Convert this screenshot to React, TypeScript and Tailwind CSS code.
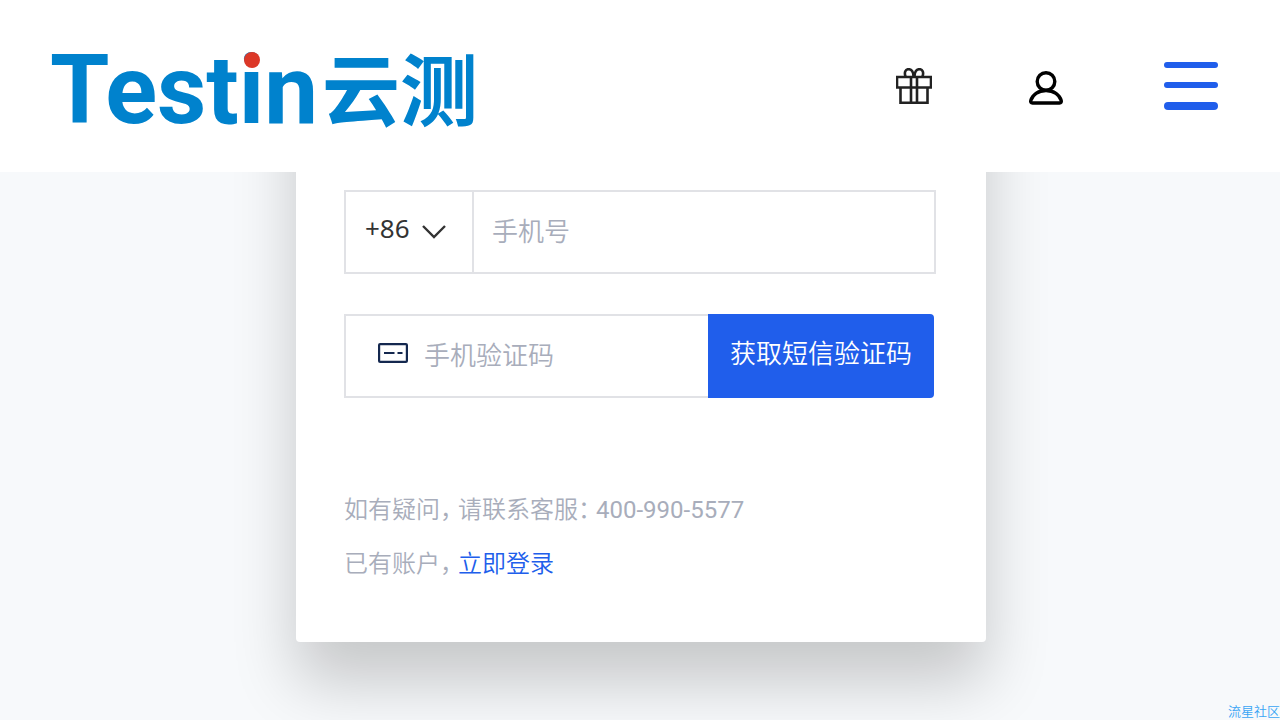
import { useState } from "react"

const cjk = "font-['Roboto','Noto_Sans_CJK_SC',sans-serif]"

function Logo() {
  return (
    <a href="#" aria-label="Testin云测" className="flex items-center gap-1 text-[#0082cd]">
      <span className="pt-2 font-['Roboto',sans-serif] text-[96px] leading-[100px] font-bold">
        Test
        <span className="relative">
          i
          <span className="absolute top-[18px] left-1/2 size-4 -translate-x-1/2 rounded-full bg-[#dc3828]" />
        </span>
        n
      </span>
      <span className="font-['Noto_Sans_CJK_SC',sans-serif] text-[78px] leading-[100px] font-bold">云测</span>
    </a>
  )
}

function GiftIcon() {
  return (
    <svg viewBox="0 0 36 36" className="size-9" fill="none" stroke="#222" strokeWidth="2.600">
      <path d="M1 9h34v10.500H1zM4.500 19.500v15.300h27V19.500M15 9v26M21 9v26" />
      <path d="M17.500 8.500c0-5-2-7.300-5-7.300S8 4.500 9.500 8.500M18.500 8.500c0-5 2-7.300 5-7.300s4.500 3.300 3 7.300" />
    </svg>
  )
}

function UserIcon() {
  return (
    <svg viewBox="0 0 36 36" className="size-9 overflow-visible" fill="none" stroke="#000" strokeWidth="3.400">
      <circle cx="16" cy="13.500" r="8.800" />
      <path d="M16 22.500C8 22.500 2.500 27 .8 32.500q-.6 2.500 1.700 2.500h27q2.300 0 1.700-2.500C29.500 27 24 22.500 16 22.500z" />
    </svg>
  )
}

function CodeIcon() {
  return (
    <svg viewBox="0 0 30 20" className="h-5 w-[30px] shrink-0" fill="none" stroke="#14284f" strokeWidth="2.200">
      <rect x="1.100" y="1.100" width="27.800" height="17.800" rx="1" />
      <path d="M6 10h10.500M19.500 10H24.500" />
    </svg>
  )
}

function Header() {
  return (
    <header className="relative z-10 flex h-[172px] shrink-0 items-center justify-between bg-white pr-[62px] pl-[50px]">
      <Logo />
      <nav className="flex items-center gap-[98px]">
        <button type="button" aria-label="礼品">
          <GiftIcon />
        </button>
        <button type="button" aria-label="用户">
          <UserIcon />
        </button>
        <button type="button" aria-label="菜单" className="flex w-[54px] flex-col gap-3.5">
          <span className="h-1.5 w-full rounded-[3px] bg-[#205eeb]" />
          <span className="h-1.5 w-full rounded-[3px] bg-[#205eeb]" />
          <span className="h-2 w-full rounded bg-[#205eeb]" />
        </button>
      </nav>
    </header>
  )
}

export default function App() {
  const [area, setArea] = useState("+86")
  const [phone, setPhone] = useState("")
  const [code, setCode] = useState("")

  return (
    <div className={`relative flex min-h-screen flex-col overflow-hidden bg-[#f7f9fb] ${cjk}`}>
      <Header />

      <main className="flex-1 pb-[78px] pl-0.5">
        <form
          onSubmit={(e) => e.preventDefault()}
          className="mx-auto -mt-40 max-w-[690px] rounded bg-white pt-[178px] pr-[50px] pb-[51px] pl-12 shadow-[0_40px_64px_rgba(0,0,0,0.2)]"
        >
          {/* Phone number */}
          <div className="flex h-[84px] border-2 border-[#e1e2e6]">
            <div className="relative w-32 shrink-0 border-r-2 border-[#e1e2e6]">
              <select
                aria-label="区号"
                value={area}
                onChange={(e) => setArea(e.target.value)}
                className="h-full w-full appearance-none bg-transparent pb-2 pl-[19px] font-['Noto_Sans',sans-serif] text-[26px] text-[#333] outline-none"
              >
                <option>+86</option>
                <option>+852</option>
                <option>+853</option>
              </select>
              <svg
                viewBox="0 0 24 14"
                className="pointer-events-none absolute top-[33px] right-[26px] h-3.5 w-6"
                fill="none"
                stroke="#333"
                strokeWidth="2.400"
              >
                <path d="M1 1l11 11L23 1" />
              </svg>
            </div>
            <input
              type="tel"
              aria-label="手机号"
              placeholder="手机号"
              value={phone}
              onChange={(e) => setPhone(e.target.value)}
              className="min-w-0 flex-1 px-[18px] text-[26px] font-[350] text-[#333] outline-none placeholder:text-[#a8adbb]"
            />
          </div>

          {/* SMS code */}
          <div className="mt-10 mr-0.5 flex h-[84px]">
            <label className="flex min-w-0 flex-1 items-center gap-4 border-2 border-r-0 border-[#e1e2e6] pl-8">
              <span className="pb-1.5">
                <CodeIcon />
              </span>
              <input
                type="text"
                aria-label="手机验证码"
                placeholder="手机验证码"
                value={code}
                onChange={(e) => setCode(e.target.value)}
                className="min-w-0 flex-1 text-[26px] font-[350] text-[#333] outline-none placeholder:text-[#a8adbb]"
              />
            </label>
            <button
              type="button"
              className="w-[226px] shrink-0 rounded-r bg-[#205eeb] pb-1 text-[26px] font-[350] text-white"
            >
              获取短信验证码
            </button>
          </div>

          <div className="mt-[85px] text-2xl leading-[54px] font-[350] text-[#a8adbb]">
            <p>
              如有疑问<span className="mr-1.5 [font-feature-settings:'halt']">，</span>请联系客服
              <span className="mr-1.5 [font-feature-settings:'halt']">：</span>
              <span className="font-normal">400-990-5577</span>
            </p>
            <p>
              已有账户<span className="mr-1.5 [font-feature-settings:'halt']">，</span>
              <a href="#" className="text-[#205eeb]">立即登录</a>
            </p>
          </div>
        </form>
      </main>

      <span className="absolute right-0 bottom-0 text-[13px] leading-3 font-[350] text-[#3aa5f5]">
        <span className="block pb-0.5">流星社区</span>
      </span>
    </div>
  )
}
